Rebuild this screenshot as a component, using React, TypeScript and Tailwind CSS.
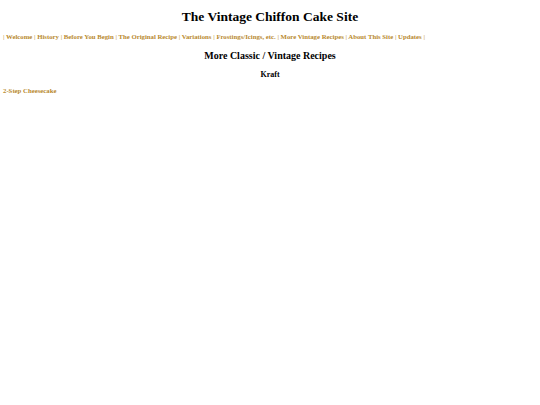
const links = [
  "Welcome",
  "History",
  "Before You Begin",
  "The Original Recipe",
  "Variations",
  "Frostings/Icings, etc.",
  "More Vintage Recipes",
  "About This Site",
  "Updates",
];

export default function App() {
  return (
    <div className="min-h-screen bg-white text-black font-['Liberation_Serif',serif]">
      <h1 className="pt-[9px] text-center text-[13.5px] font-bold leading-[16px]">
        The Vintage Chiffon Cake Site
      </h1>
      <nav className="mt-[7px] px-[3px] text-[6.75px] font-bold leading-[10px] text-[#c9a85a]">
        |
        {links.map((l) => (
          <span key={l}>
            {" "}
            <a href="#" className="text-[#b8892e]">
              {l}
            </a>{" "}
            |
          </span>
        ))}
      </nav>
      <h2 className="mt-[8px] text-center text-[10px] font-bold leading-[12px]">
        More Classic / Vintage Recipes
      </h2>
      <h3 className="mt-[8px] text-center text-[8px] font-bold leading-[10px]">
        Kraft
      </h3>
      <p className="mt-[6px] px-[3px] text-[6.75px] font-bold leading-[10px]">
        <a href="#" className="text-[#b8892e]">
          2-Step Cheesecake
        </a>
      </p>
    </div>
  );
}
